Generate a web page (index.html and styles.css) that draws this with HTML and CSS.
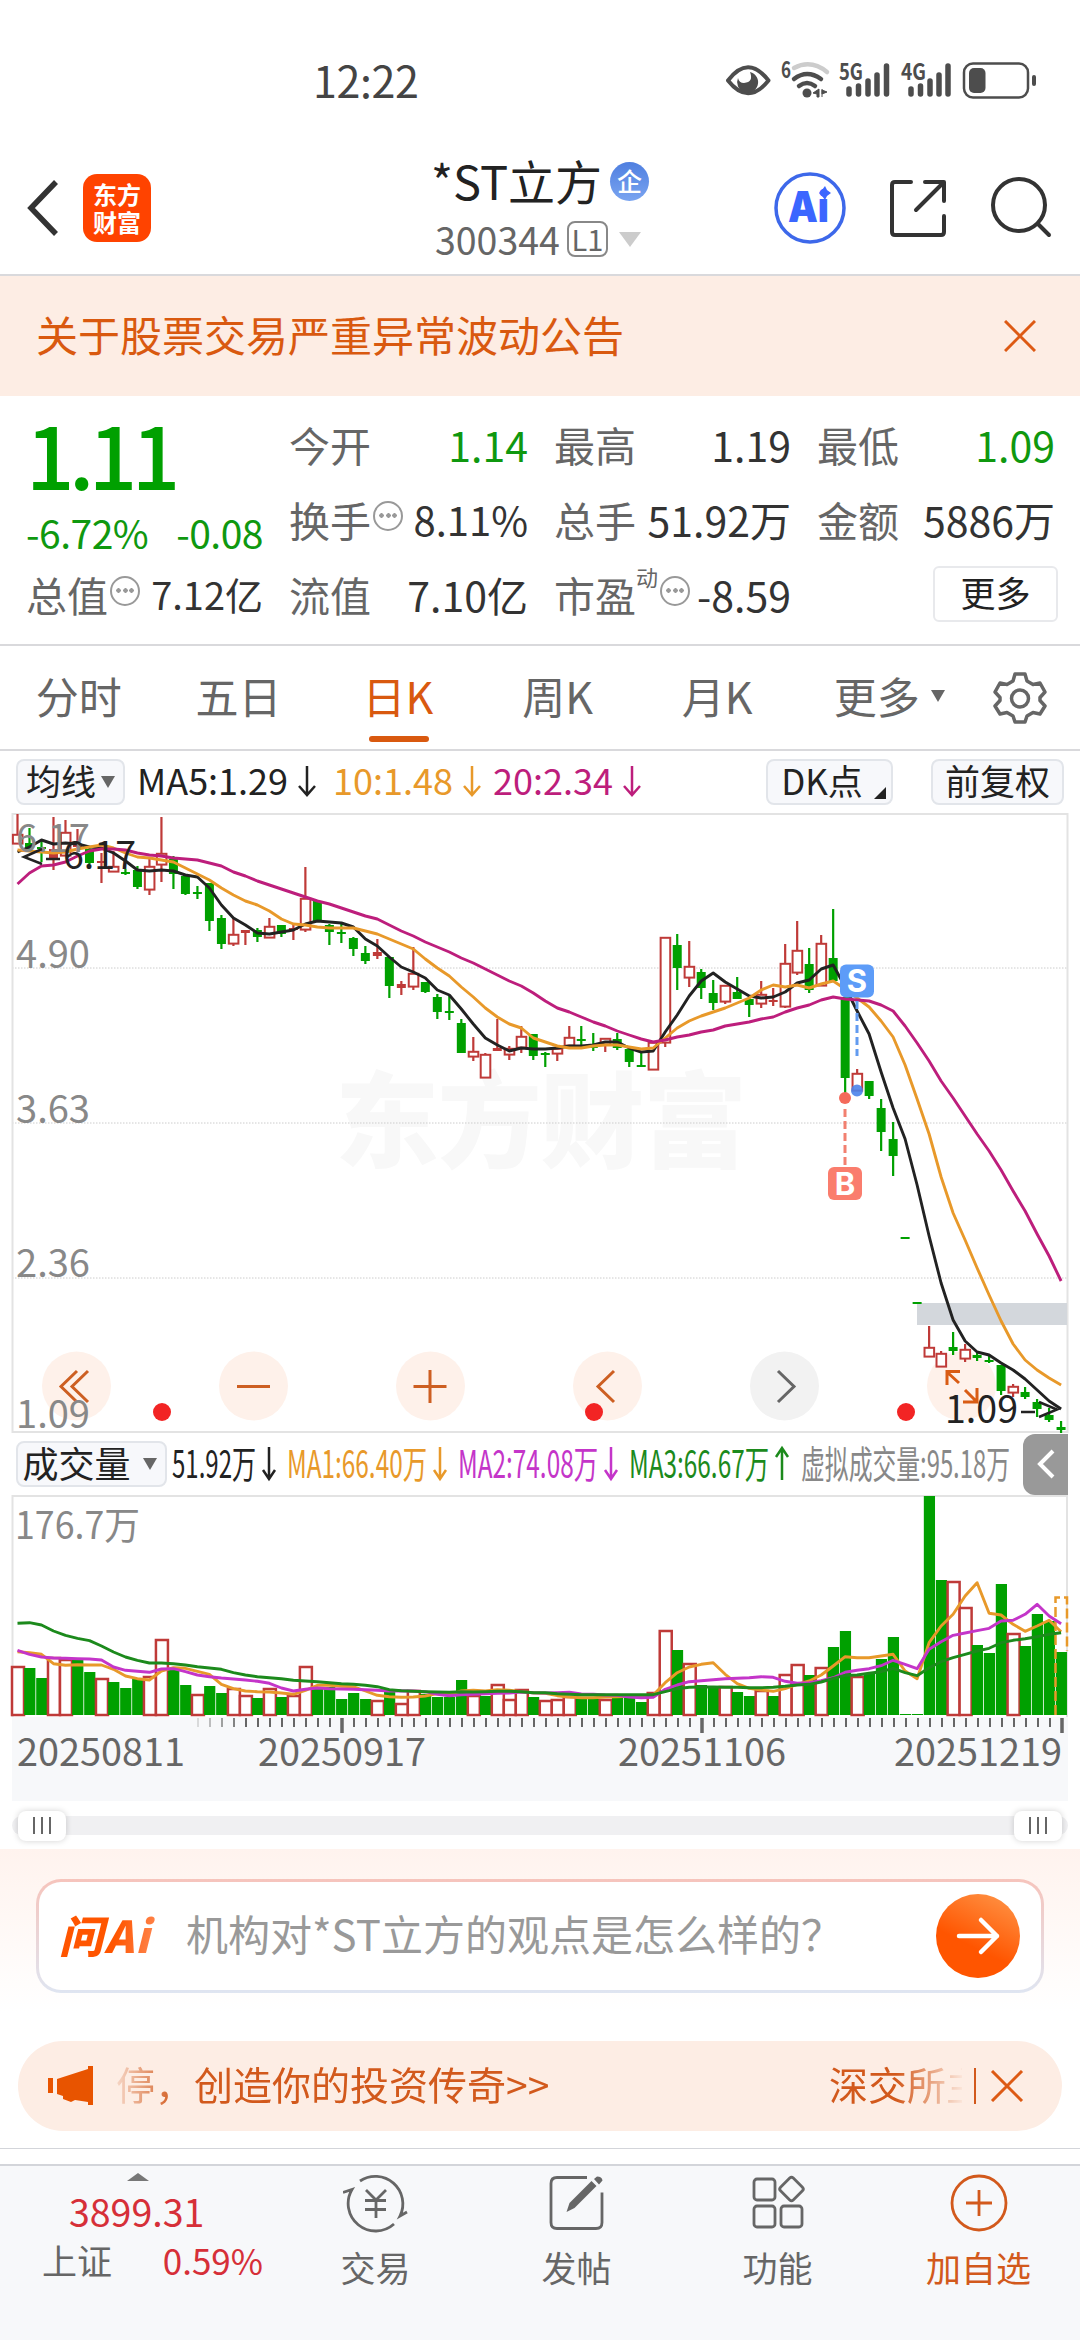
FILE: index.html
```
<!DOCTYPE html>
<html lang="zh-CN">
<head>
  <meta charset="UTF-8">
  <title>*ST立方 300344</title>
  <link rel="stylesheet" href="styles.css">
</head>
<body>
  <div class="status-bar">
    <span class="clock">12:22</span>
    <svg class="status-icons" width="318" height="60" viewBox="722 50 318 60">
      <path d="M728 80.500Q748 54 768.500 80.500Q748 106 728 80.500Z" fill="none" stroke="#4d4d4d" stroke-width="4" stroke-linejoin="round"/>
      <path d="M738 78a10.500 10.500 0 1 0 12-6q4 10-6 11-5 0-6-5z" fill="#4d4d4d"/>
      <text x="781" y="78" class="net" textLength="10" lengthAdjust="spacingAndGlyphs">6</text>
      <g fill="none" stroke="#4d4d4d" stroke-width="4.500" stroke-linecap="round">
        <path d="M794 68q17-9 33 4" stroke="#ccc"/>
        <path d="M794 79q13-10 27 0"/>
        <path d="M799 86q8-6 16 0"/>
      </g>
      <circle cx="807" cy="93" r="4.500" fill="#4d4d4d"/>
      <path d="M813 93l6-4v8h-2v-3zM822 89v8M822 90l5 2-5 2z" fill="#4d4d4d" stroke="#4d4d4d" stroke-width="1"/>
      <text x="839" y="80" class="net" textLength="24" lengthAdjust="spacingAndGlyphs">5G</text>
      <path d="M849 89v5M858.500 86v8M868 81v13M877 75v19M886.500 66v28" stroke="#4d4d4d" stroke-width="5.500" stroke-linecap="round"/>
      <text x="901" y="80" class="net" textLength="25" lengthAdjust="spacingAndGlyphs">4G</text>
      <path d="M911 89v5M920.500 86v8M930 81v13M939 75v19M948 66v28" stroke="#4d4d4d" stroke-width="5.500" stroke-linecap="round"/>
      <rect x="964" y="63.500" width="64" height="34" rx="9" fill="none" stroke="#4d4d4d" stroke-width="2.500"/>
      <rect x="969" y="68" width="16.500" height="25" rx="5" fill="#4d4d4d"/>
      <rect x="1032" y="75" width="4" height="11" rx="2" fill="#4d4d4d"/>
    </svg>
  </div>

  <header class="header">
    <div class="header-side">
      <svg class="back" width="34" height="58" viewBox="0 0 34 58"><path d="M31 3L6 29L31 55" fill="none" stroke="#333" stroke-width="5.500"/></svg>
      <div class="app-logo"><span>东方</span><span>财富</span></div>
    </div>
    <div class="stock">
      <div class="stock-name">*ST立方<span class="corp">企</span></div>
      <div class="stock-code">300344<span class="level">L1</span><i class="tri-down light"></i></div>
    </div>
    <div class="header-side right">
      <svg width="72" height="72" viewBox="0 0 72 72">
        <circle cx="36" cy="36" r="34" fill="none" stroke="#3d68ea" stroke-width="3.500"/>
        <text x="14" y="50" class="ai-mark" textLength="41" lengthAdjust="spacingAndGlyphs">Ai</text>
        <path d="M51 14l2 4 4 3-4 3-2 4-3-4-3-3 3-3z" fill="#3b66ff"/>
      </svg>
      <svg width="60" height="60" viewBox="0 0 60 60">
        <path d="M23 4H7Q4 4 4 7V54Q4 57 7 57H53Q56 57 56 54V38M37 4H56V23M55 5L28 32" fill="none" stroke="#333" stroke-width="4" stroke-linecap="round" stroke-linejoin="round"/>
      </svg>
      <svg width="62" height="62" viewBox="0 0 62 62">
        <circle cx="29" cy="28" r="26" fill="none" stroke="#333" stroke-width="4"/>
        <path d="M48 47L59 58" stroke="#333" stroke-width="4" stroke-linecap="round"/>
      </svg>
    </div>
  </header>

  <div class="banner">
    <span>关于股票交易严重异常波动公告</span>
    <svg width="32" height="32" viewBox="0 0 32 32"><path d="M1 1L31 31M31 1L1 31" stroke="#dd5a14" stroke-width="3"/></svg>
  </div>

  <section class="quote">
    <div class="price">
      <div class="last">1.11</div>
      <div class="change"><span>-6.72%</span><span>-0.08</span></div>
    </div>
    <div class="cell"><span>今开</span><b class="green">1.14</b></div>
    <div class="cell"><span>最高</span><b>1.19</b></div>
    <div class="cell"><span>最低</span><b class="green">1.09</b></div>
    <div class="cell"><span>换手<i class="info"></i></span><b class="mid">8.11%</b></div>
    <div class="cell"><span>总手</span><b>51.92万</b></div>
    <div class="cell"><span>金额</span><b>5886万</b></div>
    <div class="cell"><span>总值<i class="info"></i></span><b class="narrow">7.12亿</b></div>
    <div class="cell"><span>流值</span><b>7.10亿</b></div>
    <div class="cell"><span>市盈<sup>动</sup><i class="info"></i></span><b>-8.59</b></div>
    <div class="cell end"><button class="more">更多</button></div>
  </section>

  <nav class="tabs">
    <a>分时</a>
    <a>五日</a>
    <a class="active">日K</a>
    <a>周K</a>
    <a>月K</a>
    <a>更多<i class="tri-down"></i></a>
    <svg class="gear" width="54" height="54" viewBox="0 0 54 54" fill="none" stroke="#666" stroke-width="3.500" stroke-linejoin="round">
      <path d="M22 3h10l2 7 6 3.500 7-1.500 5 9-5 5.500v3l5 5.500-5 8-7-1.500-6 3.500-2 6h-10l-2-6-6-3.500-7 1.500-5-8 5-5.500v-3l-5-5.500 5-9 7 1.500 6-3.500z"/>
      <circle cx="27" cy="27.500" r="8.500"/>
    </svg>
  </nav>

  <div class="indicator">
    <button class="chip">均线<i class="tri-down small"></i></button>
    <span class="ma ma5">MA5:1.29<svg width="20" height="32" viewBox="0 0 20 32"><path d="M10 1V30M2 21l8 9 8-9"/></svg></span>
    <span class="ma ma10">10:1.48<svg width="20" height="32" viewBox="0 0 20 32"><path d="M10 1V30M2 21l8 9 8-9"/></svg></span>
    <span class="ma ma20">20:2.34<svg width="20" height="32" viewBox="0 0 20 32"><path d="M10 1V30M2 21l8 9 8-9"/></svg></span>
    <button class="chip dk">DK点<i class="corner"></i></button>
    <button class="chip adjust">前复权</button>
  </div>

  <svg class="kline" id="kline" width="1080" height="620" viewBox="0 812 1080 620"></svg>

  <div class="vol-head">
    <button class="chip">成交量<i class="tri-down small"></i></button>
    <svg width="848" height="60" viewBox="170 0 848 60" class="vol-text">
      <text x="172" y="44" textLength="84" lengthAdjust="spacingAndGlyphs" fill="#222">51.92万</text>
      <text x="287" y="44" textLength="140" lengthAdjust="spacingAndGlyphs" fill="#e8992a">MA1:66.40万</text>
      <text x="458" y="44" textLength="140" lengthAdjust="spacingAndGlyphs" fill="#c435c9">MA2:74.08万</text>
      <text x="629" y="44" textLength="140" lengthAdjust="spacingAndGlyphs" fill="#1c8a1c">MA3:66.67万</text>
      <text x="801" y="44" textLength="209" lengthAdjust="spacingAndGlyphs" fill="#888">虚拟成交量:95.18万</text>
      <g fill="none" stroke-width="2.500">
        <path d="M269 13v32M263 36l6 9 6-9" stroke="#222"/>
        <path d="M440 13v32M434 36l6 9 6-9" stroke="#e8992a"/>
        <path d="M611 13v32M605 36l6 9 6-9" stroke="#c435c9"/>
        <path d="M782 46v-32M776 23l6-9 6 9" stroke="#1c8a1c"/>
      </g>
    </svg>
    <div class="drawer"><svg width="20" height="32" viewBox="0 0 20 32"><path d="M17 3L4 16L17 29" fill="none" stroke="#fff" stroke-width="4"/></svg></div>
  </div>

  <svg class="volume" id="volume" width="1080" height="306" viewBox="0 1494 1080 306"></svg>

  <div class="slider">
    <i class="handle"></i>
    <i class="handle"></i>
  </div>

  <section class="ask">
    <div class="ask-box">
      <span class="ask-logo">问Ai</span>
      <span class="ask-text">机构对*ST立方的观点是怎么样的？</span>
      <svg width="84" height="84" viewBox="0 0 84 84">
        <defs><linearGradient id="go" x1="0.8" y1="0" x2="0.3" y2="1"><stop offset="0" stop-color="#ff9143"/><stop offset="0.65" stop-color="#ff5500"/></linearGradient></defs>
        <circle cx="42" cy="42" r="42" fill="url(#go)"/>
        <path d="M23 42H61M45 26L61 42L45 58" fill="none" stroke="#fff" stroke-width="4.500" stroke-linecap="round" stroke-linejoin="round"/>
      </svg>
    </div>
  </section>

  <div class="notice">
    <svg width="46" height="40" viewBox="0 0 46 40" fill="#e85400"><path d="M0 12h5v15H0zM9 13L40 3V0h5v39h-5v-3l-13-2-4 2-8-3v-3l-6-2z"/></svg>
    <div class="marquee">
      <span>停，创造你的投资传奇&gt;&gt;</span>
      <span>深交所主</span>
    </div>
    <i class="split"></i>
    <svg width="34" height="32" viewBox="0 0 34 32"><path d="M2 1L32 31M32 1L2 31" stroke="#dd5a14" stroke-width="3"/></svg>
  </div>

  <footer class="bottom">
    <div class="index">
      <i class="tri-up"></i>
      <div class="index-value">3899.31</div>
      <div class="index-row"><span>上证</span><span class="red">0.59%</span></div>
    </div>
    <a>
      <svg width="66" height="60" viewBox="343 2174 66 60" fill="none" stroke="#666" stroke-width="2.800">
        <path d="M360 2182A27.500 27.500 0 0 1 400 2217l7-4"/>
        <path d="M394 2225A27.500 27.500 0 0 1 352 2190.500l-9 3"/>
        <path d="M366 2191l10 10 10-10M376 2201v18M365 2201.500h21M365 2210.500h21"/>
      </svg>
      交易
    </a>
    <a>
      <svg width="60" height="60" viewBox="548 2174 60 60" fill="none" stroke="#666" stroke-width="2.800">
        <path d="M588 2178.500h-30q-6 0-6 6v39q0 6 6 6h39q6 0 6-6v-30"/>
        <path d="M567.500 2213l3-9 22-22 5 5-22 22zM595 2180l3-2.500q5 0 5.500 4l-3.500 4z" fill="#666" stroke="none"/>
      </svg>
      发帖
    </a>
    <a>
      <svg width="60" height="60" viewBox="748 2174 60 60" fill="none" stroke="#666" stroke-width="2.800" stroke-linejoin="round">
        <rect x="754" y="2180" width="21" height="21" rx="3"/>
        <rect x="754" y="2207" width="21" height="21" rx="3"/>
        <rect x="781" y="2207" width="21" height="21" rx="3"/>
        <rect x="782.500" y="2181" width="18" height="18" rx="2.500" transform="rotate(45 791.500 2190)"/>
      </svg>
      功能
    </a>
    <a class="add">
      <svg width="60" height="60" viewBox="0 0 60 60" fill="none" stroke="#d2591c" stroke-width="2.800"><circle cx="30" cy="30" r="27"/><path d="M17 30h26M30 17v26"/></svg>
      加自选
    </a>
  </footer>

  <script src="chart.js"></script>
</body>
</html>
```

FILE: styles.css
```
* {
  box-sizing: border-box;
}
body {
  margin: 0;
  width: 1080px;
  height: 2340px;
  overflow: hidden;
  background: #fff;
  color: #333;
  font-family: "Noto Sans CJK SC", sans-serif;
}
svg {
  display: block;
  flex: none;
}
button {
  font-family: inherit;
  color: #222;
}
i {
  font-style: normal;
}
.green { color: #0f980f; }
.red { color: #d62f38; }

.tri-down {
  display: inline-block;
  border: 7px solid transparent;
  border-top: 12px solid #666;
  border-bottom: 0;
}
.tri-down.light {
  border-width: 15px 11px 0;
  border-top-color: #ccc;
  margin-left: 11px;
}
.tri-down.small {
  border-width: 12px 7px 0;
}

/* status bar */
.status-bar {
  display: flex;
  justify-content: space-between;
  height: 136px;
  padding: 50px 40px 0 313px;
}
.clock {
  font-size: 43px;
  line-height: 44px;
  color: #444;
  margin-top: 7px;
  letter-spacing: -0.4px;
}
.net {
  font-size: 23px;
  font-weight: 700;
  fill: #4d4d4d;
}

/* header */
.header {
  display: grid;
  grid-template-columns: 400px 280px 400px;
  height: 140px;
  border-bottom: 2px solid #d9d9dc;
}
.header-side {
  display: flex;
  align-items: center;
  height: 140px;
  padding: 4px 0 0 25px;
}
.header-side.right {
  justify-content: flex-end;
  gap: 42px;
  padding: 4px 28px 0 0;
}
.app-logo {
  display: flex;
  flex-direction: column;
  justify-content: center;
  width: 68px;
  height: 68px;
  margin-left: 24px;
  border-radius: 14px;
  background: #ff4300;
  color: #fff;
  font-size: 24px;
  font-weight: 700;
  line-height: 28px;
  text-align: center;
}
.stock {
  padding: 14px 0 0 31px;
  white-space: nowrap;
}
.stock-name {
  display: flex;
  align-items: center;
  font-size: 47px;
  line-height: 60px;
  color: #222;
}
.corp {
  width: 39px;
  height: 39px;
  margin: 3px 0 0 8px;
  border-radius: 50%;
  background: linear-gradient(#4f7fe0, #7aa4f0);
  color: #fff;
  font-size: 25px;
  font-weight: 500;
  line-height: 37px;
  text-align: center;
}
.stock-code {
  display: flex;
  align-items: center;
  margin-top: 6px;
  padding-left: 4px;
  font-size: 37.500px;
  line-height: 46px;
  color: #666;
}
.level {
  width: 41px;
  height: 36px;
  margin-left: 7px;
  border: 2px solid #888;
  border-radius: 8px;
  font-size: 29px;
  line-height: 30px;
  text-align: center;
}
.ai-mark {
  font-family: Inter, sans-serif;
  font-size: 42px;
  font-weight: 900;
  fill: #3b66ff;
}

.banner {
  display: flex;
  align-items: center;
  justify-content: space-between;
  height: 120px;
  padding: 0 44px 0 36px;
  background: #fdede4;
  color: #d9590f;
  font-size: 42px;
}
.banner span {
  margin-top: -5px;
}

/* quote */
.quote {
  display: grid;
  grid-template-columns: 237px 239px 237px 238px;
  grid-template-rows: repeat(3, 75px);
  column-gap: 26px;
  height: 250px;
  padding: 12px 25px 0 26px;
  border-bottom: 2px solid #d9d9dc;
}
.price {
  grid-row: span 2;
  color: #00a000;
}
.last {
  font-size: 85px;
  font-weight: 500;
  line-height: 86px;
  padding-top: 2px;
  letter-spacing: -5.5px;
}
.change {
  display: flex;
  justify-content: space-between;
  margin-top: 16px;
  font-size: 39px;
  line-height: 40px;
  letter-spacing: -0.5px;
  color: #0f980f;
}
.cell {
  display: flex;
  justify-content: space-between;
  align-items: center;
  font-size: 41px;
  line-height: 74px;
  white-space: nowrap;
  margin-top: -2px;
  height: 75px;
}
.cell span {
  display: flex;
  align-items: center;
  color: #666;
}
.cell b {
  font-weight: 400;
}
.cell b.mid {
  font-size: 40px;
}
.cell b.narrow {
  font-size: 38px;
}
.cell.end {
  justify-content: flex-end;
}
.cell sup {
  font-size: 22px;
  line-height: 24px;
  align-self: flex-start;
  margin-top: 7px;
}
.info {
  width: 30px;
  height: 30px;
  margin: -6px 0 0 2px;
  border: 2px solid #999;
  border-radius: 50%;
  background: radial-gradient(circle, #999 2px, transparent 2.5px) center / 7px 7px no-repeat,
    radial-gradient(circle, #999 2px, transparent 2.5px) 3px center / 7px 7px no-repeat,
    radial-gradient(circle, #999 2px, transparent 2.5px) 16px center / 7px 7px no-repeat;
}
.more {
  width: 125px;
  height: 56px;
  margin-right: -3px;
  padding: 0 0 4px;
  border: 2px solid #e8e9ec;
  border-radius: 6px;
  background: #fff;
  font-size: 35px;
  line-height: 48px;
}

/* period tabs */
.tabs {
  display: flex;
  align-items: center;
  height: 105px;
  border-bottom: 2px solid #d9d9dc;
}
.tabs a {
  position: relative;
  width: 159.600px;
  padding: 0 2px 6px 0;
  font-size: 43px;
  line-height: 90px;
  text-align: center;
  color: #666;
  white-space: nowrap;
}
.tabs a .tri-down {
  position: absolute;
  right: 13px;
  top: 40px;
}
.tabs .active {
  color: #d9590f;
}
.tabs .active::after {
  content: "";
  position: absolute;
  left: 50%;
  bottom: 4px;
  width: 60px;
  height: 6px;
  margin-left: -30px;
  border-radius: 3px;
  background: #d9590f;
}
.gear {
  margin-left: 35px;
}

/* moving average row */
.indicator {
  display: flex;
  align-items: center;
  height: 62px;
  padding: 0 16px;
}
.chip {
  display: flex;
  align-items: center;
  justify-content: center;
  height: 46px;
  padding: 0 8px 5px;
  border: 2px solid #e2e5ea;
  border-radius: 8px;
  background: #f7f8fb;
  font-size: 35px;
  line-height: 40px;
  white-space: nowrap;
}
.chip .tri-down {
  margin: 4px 0 0 5px;
}
.ma {
  display: flex;
  align-items: center;
  font-size: 36px;
  line-height: 44px;
  margin-top: -6px;
}
.ma svg {
  margin: 4px 0 0 9px;
  fill: none;
  stroke: currentColor;
  stroke-width: 2.5;
}
.ma5 { color: #222; margin-left: 12px; width: 196px; }
.ma10 { color: #e8992a; width: 160px; }
.ma20 { color: #bd1e7c; }
.dk {
  position: relative;
  width: 127px;
  margin: 0 38px 0 auto;
  padding-right: 23px;
}
.adjust {
  width: 133px;
}
.corner {
  position: absolute;
  right: 5px;
  bottom: 4px;
  border-left: 12px solid transparent;
  border-bottom: 12px solid #222;
}

/* charts */
.kline text,
.volume text {
  font-size: 38px;
}
.kline .mark {
  font-family: Inter, sans-serif;
  font-size: 31px;
  font-weight: 700;
  fill: #fff;
  text-anchor: middle;
}
.kline .watermark {
  font-size: 104px;
  font-weight: 900;
  fill: #f8f8f8;
}
.vol-head {
  display: flex;
  align-items: center;
  height: 62px;
  padding-left: 16px;
}
.vol-head .chip {
  width: 151px;
  padding-right: 12px;
  font-size: 36px;
}
.vol-head .chip .tri-down {
  margin-left: 12px;
}
.vol-text {
  margin-left: 3px;
  font-size: 38px;
}
.drawer {
  display: flex;
  align-items: center;
  justify-content: center;
  width: 45px;
  height: 61px;
  margin-left: 5px;
  border-radius: 12px 0 0 12px;
  background: #999;
}

/* range slider */
.slider {
  display: flex;
  justify-content: space-between;
  align-items: center;
  height: 19px;
  margin: 15px 12px 14px;
  padding: 0 6px;
  border-radius: 10px;
  background: #f0f0f2;
}
.handle {
  width: 48px;
  height: 30px;
  border-radius: 8px;
  background:
    linear-gradient(#666, #666) 15px center / 2px 17px no-repeat,
    linear-gradient(#666, #666) 23px center / 2px 17px no-repeat,
    linear-gradient(#666, #666) 31px center / 2px 17px no-repeat, #fff;
  box-shadow: 0 0 6px rgba(0, 0, 0, 0.18);
}

/* ask ai */
.ask {
  height: 192px;
  padding: 30px 36px 0;
  background: linear-gradient(#fff3ee, #fff 85%);
}
.ask-box {
  display: flex;
  align-items: center;
  height: 114px;
  padding: 0 21px 0 20px;
  border: 3px solid transparent;
  border-radius: 25px;
  background: linear-gradient(#fff, #fff) padding-box, linear-gradient(#f6c4bc, #dfe5f1) border-box;
}
.ask-logo {
  width: 102px;
  font-size: 44px;
  font-weight: 900;
  font-style: italic;
  line-height: 60px;
  letter-spacing: 1.5px;
  margin-top: -4px;
  background: linear-gradient(100deg, #ff5500 55%, #ff9160);
  -webkit-background-clip: text;
  background-clip: text;
  color: transparent;
}
.ask-text {
  flex: 1;
  margin: -8px 0 0 25px;
  font-size: 42px;
  color: #999;
  white-space: nowrap;
}

.notice {
  display: flex;
  align-items: center;
  height: 90px;
  margin: 0 18px;
  padding: 0 36px 0 30px;
  border-radius: 45px;
  background: #fdede4;
  color: #d2591c;
}
.marquee {
  display: flex;
  justify-content: space-between;
  width: 856px;
  margin-left: 12px;
  padding-left: 10px;
  overflow: hidden;
  font-size: 39px;
  white-space: nowrap;
  -webkit-mask-image: linear-gradient(90deg, transparent, #000 70px, #000 790px, transparent 860px);
  mask-image: linear-gradient(90deg, transparent, #000 70px, #000 790px, transparent 860px);
}
.marquee span {
  margin-top: -6px;
}
.marquee span:last-child {
  width: 133px;
}
.split {
  width: 2px;
  height: 36px;
  margin: 0 14px 0 12px;
  background: #d2591c;
}

/* bottom bar */
.bottom {
  display: flex;
  height: 209px;
  margin-top: 17px;
  padding-top: 16px;
  border-top: 1px solid #d3d5da;
  background: linear-gradient(#fff 15px, #d3d5da 15px, #d3d5da 17px, #f7f8fa 17px) 0 0 no-repeat;
}
.bottom a {
  display: flex;
  flex-direction: column;
  align-items: center;
  width: 201px;
  padding-top: 8px;
  font-size: 35px;
  line-height: 50px;
  color: #666;
}
.bottom a svg {
  margin-bottom: 9px;
}
.bottom .add {
  color: #d2591c;
}
.index {
  width: 275px;
  padding: 8px 12px 0 42px;
}
.tri-up {
  display: block;
  width: 0;
  margin-left: 85px;
  border: 11px solid transparent;
  border-top: 0;
  border-bottom: 8px solid #777;
}
.index-value {
  padding-left: 27px;
  margin-top: 5px;
  font-size: 37.500px;
  line-height: 50px;
  color: #d62f38;
}
.index-row {
  display: flex;
  justify-content: space-between;
  font-size: 35px;
  line-height: 50px;
  color: #666;
  margin-top: -1px;
}
```

FILE: chart.js
```
const STEP = 11.995;
const FIRST = 17.5;
const RED = '#bf3a38';
const GREEN = '#00a000';
const cx = i => FIRST + STEP * i;

// type, high, body top, body bottom, low  (r = hollow, s = solid red, g = green)
const candles = `r 813 833 843 843|g 827 842 847 848|g 839 846 848 861|s 816 848 857 869|r 819 831 855 855|s 828 843 846 850|g 846 848 862 863|s 852 860 862 882
r 850 865 871 871|g 868 871 873 874|g 865 869 886 888|r 858 865 889 894|r 816 852 864 881|g 855 858 873 888|g 875 875 893 894|g 885 891 893 898
g 882 882 920 930|g 914 917 943 948|r 917 933 943 945|s 929 929 932 944|g 927 929 936 941|r 917 925 937 937|g 924 924 933 936|s 923 927 929 939
r 866 897 929 931|g 900 900 920 921|g 923 924 931 944|g 923 931 933 942|g 936 937 948 955|g 945 952 960 963|s 938 951 955 958|g 956 956 985 997
s 980 983 987 994|r 946 972 986 989|g 981 981 991 992|g 993 996 1011 1018|g 994 1010 1012 1019|g 1018 1022 1052 1052|r 1036 1050 1056 1060|r 1052 1053 1077 1077
s 1018 1047 1050 1050|r 1045 1047 1054 1059|r 1025 1035 1047 1052|g 1033 1033 1055 1059|g 1051 1052 1054 1066|r 1046 1047 1053 1060|r 1025 1036 1045 1045|g 1025 1038 1040 1044
g 1032 1045 1047 1050|r 1037 1037 1044 1051|g 1032 1038 1047 1049|g 1048 1048 1061 1066|g 1050 1064 1066 1066|r 1041 1041 1069 1069|r 936 936 1042 1046|g 933 944 967 989
r 940 965 977 986|g 968 971 987 998|g 979 992 1002 1009|r 984 984 1001 1003|g 976 991 998 998|g 997 998 1004 1016|r 980 993 1003 1007|s 987 999 1001 1005
r 943 962 1006 1007|r 920 949 972 974|g 947 963 989 992|r 934 942 985 985|g 908 957 980 980|g 996 996 1077 1097|r 1068 1072 1090 1090|g 1080 1080 1095 1098
g 1098 1107 1131 1150|g 1121 1138 1155 1175|g 1236 1236 1238 1238|g 1301 1301 1303 1303|r 1325 1346 1356 1356|r 1350 1352 1366 1366|g 1331 1346 1350 1354|r 1343 1348 1358 1361
g 1352 1354 1357 1360|g 1355 1359 1361 1362|g 1364 1364 1390 1394|r 1383 1385 1392 1396|g 1386 1391 1396 1398|g 1398 1401 1408 1416|g 1407 1414 1419 1421|g 1420 1426 1429 1432`
  .split(/[|\n]/).map(s => s.trim().split(' '));

const ma5 = [851,846,839,843,842,843,846,847,852,860,869,870,869,870,874,876,887,904,917,924,932,933,931,929,923,920,921,922,926,938,945,956,966,971,977,989,994,1008,1023,1037,1044,1050,1047,1048,
  1048,1047,1045,1045,1044,1041,1041,1047,1051,1050,1031,1014,995,980,972,981,988,995,997,996,991,982,979,968,964,986,1010,1033,1071,1107,1138,1184,1235,1282,1319,1340,1351,1354,1362,1369,1378,1389,1400,1408];
const ma10 = [849,850,851,852,851,848,846,844,847,852,856,857,859,861,867,873,879,887,894,900,904,910,918,923,924,926,927,927,927,930,933,938,943,948,958,967,975,986,996,1007,1016,1023,1027,1037,
  1041,1045,1047,1047,1045,1044,1044,1046,1048,1047,1037,1027,1020,1015,1011,1007,1002,997,989,984,986,984,987,983,980,988,997,1006,1020,1036,1064,1098,1133,1176,1212,1239,1267,1294,1320,1343,1359,1369,1377,1384];
const ma20 = [883,872,865,864,861,855,850,848,848,849,852,854,855,857,858,859,862,865,871,875,880,884,888,892,896,900,903,907,911,915,918,924,930,935,941,946,951,957,962,968,974,980,985,992,
  1000,1007,1011,1016,1021,1025,1030,1034,1038,1041,1039,1036,1034,1031,1029,1025,1023,1021,1018,1016,1011,1007,1004,999,996,998,999,1000,1004,1010,1025,1042,1060,1080,1097,1115,1133,1150,1169,1190,1210,1233,1255,1280];

const line = (ys, color, f = y => y) =>
  `<polyline points="${ys.map((y, i) => cx(i).toFixed(1) + ',' + f(y).toFixed(1)).join(' ')}" fill="none" stroke="${color}" stroke-width="2.900" stroke-linejoin="round"/>`;

function text(x, y, w, str, fill) {
  return `<text x="${x}" y="${y}" textLength="${w}" lengthAdjust="spacingAndGlyphs" fill="${fill}">${str}</text>`;
}

function drawKline() {
  let s = '<text x="335" y="1159" class="watermark" textLength="412">东方财富</text>';
  [967, 1122, 1277].forEach(y => s += `<path d="M12 ${y}H1067" stroke="#ccc" stroke-dasharray="1.500 1.500"/>`);
  s += '<rect x="12.500" y="813" width="1055" height="618" fill="none" stroke="#e3e3e3" stroke-width="2"/>';
  s += '<rect x="917" y="1302" width="150" height="22" fill="#d3d7dc"/>';

  // round tool buttons
  [76, 253, 430, 607, 784, 961].forEach(x => s += `<circle cx="${x + 0.5}" cy="1385" r="34.500" fill="${x === 784 ? '#f2f2f2' : '#fef1ea'}"/>`);
  s += `<g fill="none" stroke="#cd5f22" stroke-width="3">
    <path d="M77 1370L61 1385.500L77 1401M88 1370L72 1385.500L88 1401"/>
    <path d="M237 1385.500h33M413.500 1385.500h33M430 1369v33"/>
    <path d="M614 1370L598 1385.500L614 1401"/>
    <path d="M778 1370L794 1385.500L778 1401" stroke="#666"/>
  </g>`;
  [162, 594, 906].forEach(x => s += `<circle cx="${x}" cy="1411" r="9" fill="#f22424"/>`);

  candles.forEach(([t, hi, top, bot, lo], i) => {
    const x = cx(i), h = Math.max(bot - top, 1.5), c = t === 'g' ? GREEN : RED;
    s += `<path d="M${x} ${hi}V${top}M${x} ${bot}V${lo}" stroke="${c}" stroke-width="2.200"/>`;
    s += t === 'r'
      ? `<rect x="${x - 4.6}" y="${+top + 0.8}" width="9.600" height="${h - 1.2}" fill="#fff" stroke="${c}" stroke-width="2"/>`
      : `<rect x="${x - 4.5}" y="${top}" width="9" height="${h}" fill="${c}"/>`;
  });
  s += line(ma5, '#222') + line(ma10, '#e8992a') + line(ma20, '#bd1e7c');

  // trade marks
  s += `<path d="M857 1000V1055" stroke="#629bf0" stroke-width="3" stroke-dasharray="8 4"/>
    <path d="M845 1108V1165" stroke="#f28070" stroke-width="3" stroke-dasharray="8 4"/>
    <circle cx="845" cy="1097" r="6" fill="#f46a5b"/><circle cx="857" cy="1089.500" r="6" fill="#4b83ea" opacity="0.9"/>
    <rect x="840" y="963.500" width="34" height="33" rx="6" fill="#5d9cf8"/><text x="857" y="991" class="mark">S</text>
    <rect x="828" y="1166" width="34" height="33" rx="6" fill="#fa7d6d"/><text x="845" y="1194" class="mark">B</text>`;

  // price scale sits over the candles
  [[851, '6.17'], [967, '4.90'], [1122, '3.63'], [1276, '2.36'], [1427, '1.09']].forEach(([y, v]) => s += text(16, y, 74, v, '#888'));

  s += text(63, 868, 73, '6.17', '#222') + '<path d="M42 848L24 856L42 863M46 858H60" fill="none" stroke="#222" stroke-width="2.500"/>';
  s += `<path d="M947 1384V1370.500H960M947 1371L959 1382M963 1401H977V1387M977 1401L965 1389" fill="none" stroke="#d95c14" stroke-width="3"/>`;
  s += text(945, 1422, 73, '1.09', '#222') + '<path d="M1039 1401L1057 1408.500L1039 1416M1021 1411H1035" fill="none" stroke="#222" stroke-width="2.500"/>';
  document.getElementById('kline').innerHTML = s;
}

// volumes
const BASE = 1714;
const vols = [49,47,37,58,56,56,43,37,33,27,37,39,76,46,30,21,29,22,27,20,17,27,18,20,49,26,28,16,22,16,15,23,12,25,21,18,18,35,20,19,31,16,26,18,
  15,16,19,17,16,16,17,17,13,23,85,65,52,30,29,29,23,19,25,19,41,51,40,48,68,84,39,41,56,78,1,1,219,135,134,108,70,62,131,82,69,101,94,63];
const volType = 'rggrrggrgggrrggrggrrgrgrrgggggrgrrggggrgrrrg' + 'rrrggrgggrrgrggrggrgrrgrggrgggggggrrgggrgggg';
const vma1 = [1052,1055,1060,1088,1093,1091,1092,1092,1105,1125,1133,1137,1110,1100,1102,1111,1120,1150,1163,1170,1172,1173,1176,1180,1168,1153,1153,1156,1157,1170,1183,1187,1189,1188,1185,1178,1180,1170,1168,1170,1166,1168,1172,1175,
  1177,1184,1188,1190,1190,1188,1187,1186,1187,1182,1145,1115,1098,1090,1085,1120,1148,1162,1167,1171,1163,1150,1140,1122,1095,1067,1070,1070,1065,1060,1110,1133,1025,975,940,885,845,937,942,970,991,975,958,992];
const vma2 = [1048,1060,1068,1071,1072,1073,1074,1077,1098,1108,1111,1114,1104,1103,1112,1122,1127,1131,1134,1137,1141,1147,1161,1170,1165,1161,1163,1164,1165,1166,1168,1170,1169,1170,1172,1180,1184,1181,1180,1178,1177,1176,1173,1175,
  1176,1175,1174,1179,1180,1182,1183,1188,1190,1189,1165,1152,1142,1139,1136,1133,1132,1130,1127,1129,1141,1147,1145,1139,1130,1114,1108,1103,1094,1078,1090,1103,1045,1022,1003,996,989,982,960,958,940,910,945,968];
const vma3 = [967,965,972,990,1003,1012,1019,1035,1053,1068,1078,1086,1086,1088,1092,1097,1101,1105,1115,1122,1127,1130,1133,1138,1140,1142,1145,1148,1150,1153,1157,1166,1169,1171,1172,1173,1174,1172,1173,1172,1171,1171,1172,1175,
  1175,1178,1180,1181,1181,1181,1181,1181,1181,1181,1172,1163,1159,1158,1158,1159,1159,1160,1160,1159,1156,1152,1150,1143,1132,1123,1122,1117,1112,1102,1115,1124,1100,1082,1070,1060,1050,1042,1025,1018,1013,1007,1000,995];
const volY = v => 1300 + v / 3;

function drawVolume() {
  let s = '<path d="M12.500 1716V1495H1067V1716" fill="none" stroke="#e3e3e3" stroke-width="2"/>';
  s += '<rect x="12" y="1716" width="1056" height="84" fill="#f7f8fa"/>';
  s += text(15, 1538, 125, '176.7万', '#888');
  vols.forEach((v, i) => {
    const x = cx(i);
    s += volType[i] === 'r'
      ? `<rect x="${x - 5.5}" y="${BASE - v + 1}" width="12" height="${v - 1}" fill="#fff" stroke="${RED}" stroke-width="2.500"/>`
      : `<rect x="${x - 5.3}" y="${BASE - v}" width="11.200" height="${v}" fill="${GREEN}"/>`;
  });
  s += '<path d="M1055.500 1714V1596.500H1067V1650" fill="none" stroke="#e8992a" stroke-width="2.500" stroke-dasharray="10 4"/>';
  s += line(vma1, '#e8992a', volY) + line(vma2, '#c435c9', volY) + line(vma3, '#1c8a1c', volY);

  // date axis
  for (let i = 0; i <= 72; i++) {
    const x = 198 + i * 12;
    const major = x === 342 || x === 702 || x === 1062;
    s += `<path d="M${x} 1717V${major ? 1732 : 1726}" stroke="#666" stroke-width="${major ? 3.5 : 2}" opacity="${Math.min(1, 0.2 + i * 0.2)}"/>`;
  }
  [[17, '20250811'], [258, '20250917'], [618, '20251106'], [894, '20251219']].forEach(([x, d]) => s += text(x, 1765, 168, d, '#666'));
  document.getElementById('volume').innerHTML = s;
}

drawKline();
drawVolume();
```
